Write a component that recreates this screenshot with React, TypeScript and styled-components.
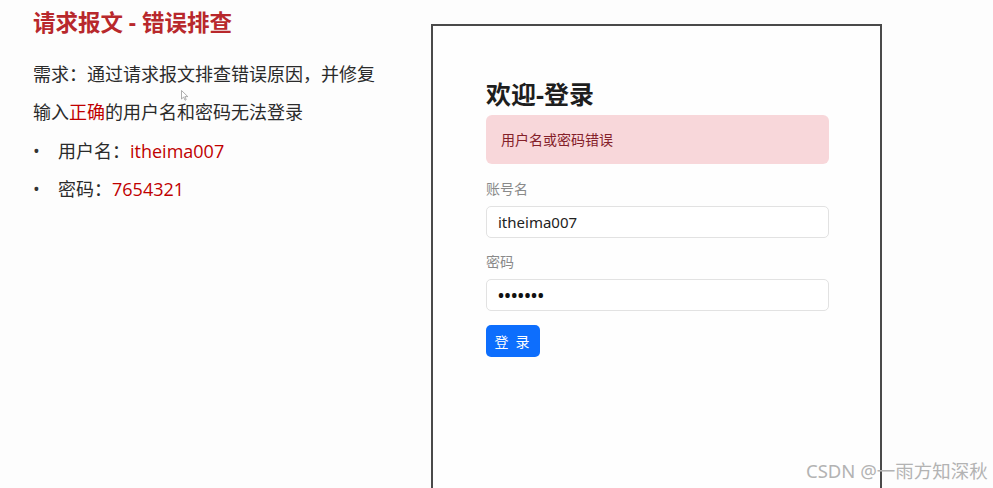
import React from "react";
import styled, { createGlobalStyle } from "styled-components";

const Global = createGlobalStyle`
  html, body { margin: 0; padding: 0; background: #fdfdfd; }
  body { font-family: "Open Sans", "Noto Sans CJK SC", sans-serif; }
  * { box-sizing: border-box; }
`;

const Page = styled.div`
  position: relative;
  width: 993px;
  height: 488px;
  overflow: hidden;
  display: flex;
  background: #fdfdfd;
  padding-left: 33px;
`;

const LeftCol = styled.div`
  width: 398px;
  display: flex;
  flex-direction: column;
  padding-top: 7px;
  color: #2b2b2b;
  font-family: "Open Sans", "Noto Sans CJK SC", sans-serif;
`;

const Heading = styled.h1`
  margin: 0;
  font-size: 22.5px;
  line-height: 31px;
  font-weight: 700;
  color: #b8282c;
`;

const Para = styled.p`
  margin: 18px 0 0;
  font-size: 18px;
  line-height: 37.5px;
`;

const Red = styled.span`
  color: #c00000;
`;

const List = styled.ul`
  list-style: none;
  margin: 1px 0 0;
  padding: 0;
`;

const Item = styled.li`
  display: flex;
  font-size: 18px;
  line-height: 38px;
`;

const Bullet = styled.span`
  width: 25px;
  font-size: 18px;
  color: #333;
`;

const Frame = styled.div`
  margin-top: 24px;
  width: 451px;
  height: 480px;
  border: 2px solid #4a4a4a;
  background: #fefefe;
  padding: 51px 51px 0 53px;
  display: flex;
  flex-direction: column;
  font-family: "Noto Sans", "Noto Sans CJK SC", sans-serif;
`;

const FormTitle = styled.h2`
  margin: 0;
  font-size: 25px;
  line-height: 34px;
  font-weight: 700;
  color: #1e1e1e;
`;

const Alert = styled.div`
  margin-top: 4px;
  background: #f8d7da;
  border-radius: 6px;
  padding: 14px 15px;
  font-size: 14px;
  line-height: 21px;
  color: #842029;
`;

const Label = styled.div<{ $gap: number }>`
  margin-top: ${(p) => p.$gap}px;
  font-size: 14px;
  line-height: 21px;
  color: #8a8a8a;
`;

const Input = styled.div`
  margin-top: 7px;
  height: 32px;
  border: 1px solid #e2e2e2;
  border-radius: 5px;
  background: #fff;
  padding: 0 11px;
  display: flex;
  align-items: center;
  font-size: 15px;
  color: #222;
`;

const Dots = styled.span`
  font-size: 16px;
  font-weight: 700;
  letter-spacing: 0.6px;
  color: #111;
`;

const Button = styled.button`
  margin-top: 14px;
  width: 54px;
  height: 32px;
  border: none;
  border-radius: 5px;
  background: #0d6efd;
  color: #fff;
  font-size: 14px;
  font-family: "Noto Sans CJK SC", sans-serif;
  letter-spacing: 2px;
  padding: 0;
  cursor: pointer;
`;

const Watermark = styled.div`
  position: absolute;
  left: 806px;
  top: 459px;
  font-size: 18.5px;
  line-height: 24px;
  color: #b3b3b3;
  font-family: "Noto Sans", "Noto Sans CJK SC", sans-serif;
  white-space: nowrap;
`;

const Cursor = styled.svg`
  position: absolute;
  left: 181px;
  top: 90px;
`;

export default function App() {
  return (
    <>
      <Global />
      <Page>
        <LeftCol>
          <Heading>请求报文 - 错误排查</Heading>
          <Para>
            需求：通过请求报文排查错误原因，并修复
            <br />
            输入<Red>正确</Red>的用户名和密码无法登录
          </Para>
          <List>
            <Item>
              <Bullet>•</Bullet>
              <span>
                用户名：<Red>itheima007</Red>
              </span>
            </Item>
            <Item>
              <Bullet>•</Bullet>
              <span>
                密码：<Red>7654321</Red>
              </span>
            </Item>
          </List>
        </LeftCol>
        <Frame>
          <FormTitle>欢迎-登录</FormTitle>
          <Alert>用户名或密码错误</Alert>
          <Label $gap={14}>账号名</Label>
          <Input>itheima007</Input>
          <Label $gap={13}>密码</Label>
          <Input>
            <Dots>•••••••</Dots>
          </Input>
          <div>
            <Button>登 录</Button>
          </div>
        </Frame>
        <Cursor width="8" height="11" viewBox="0 0 8 11">
          <path d="M0.5 0.5 L0.5 9 L2.6 7 L4 10.2 L5.2 9.6 L3.9 6.6 L6.8 6.6 Z" fill="#fff" stroke="#999" strokeWidth="0.8" />
        </Cursor>
        <Watermark>CSDN @一雨方知深秋</Watermark>
      </Page>
    </>
  );
}
